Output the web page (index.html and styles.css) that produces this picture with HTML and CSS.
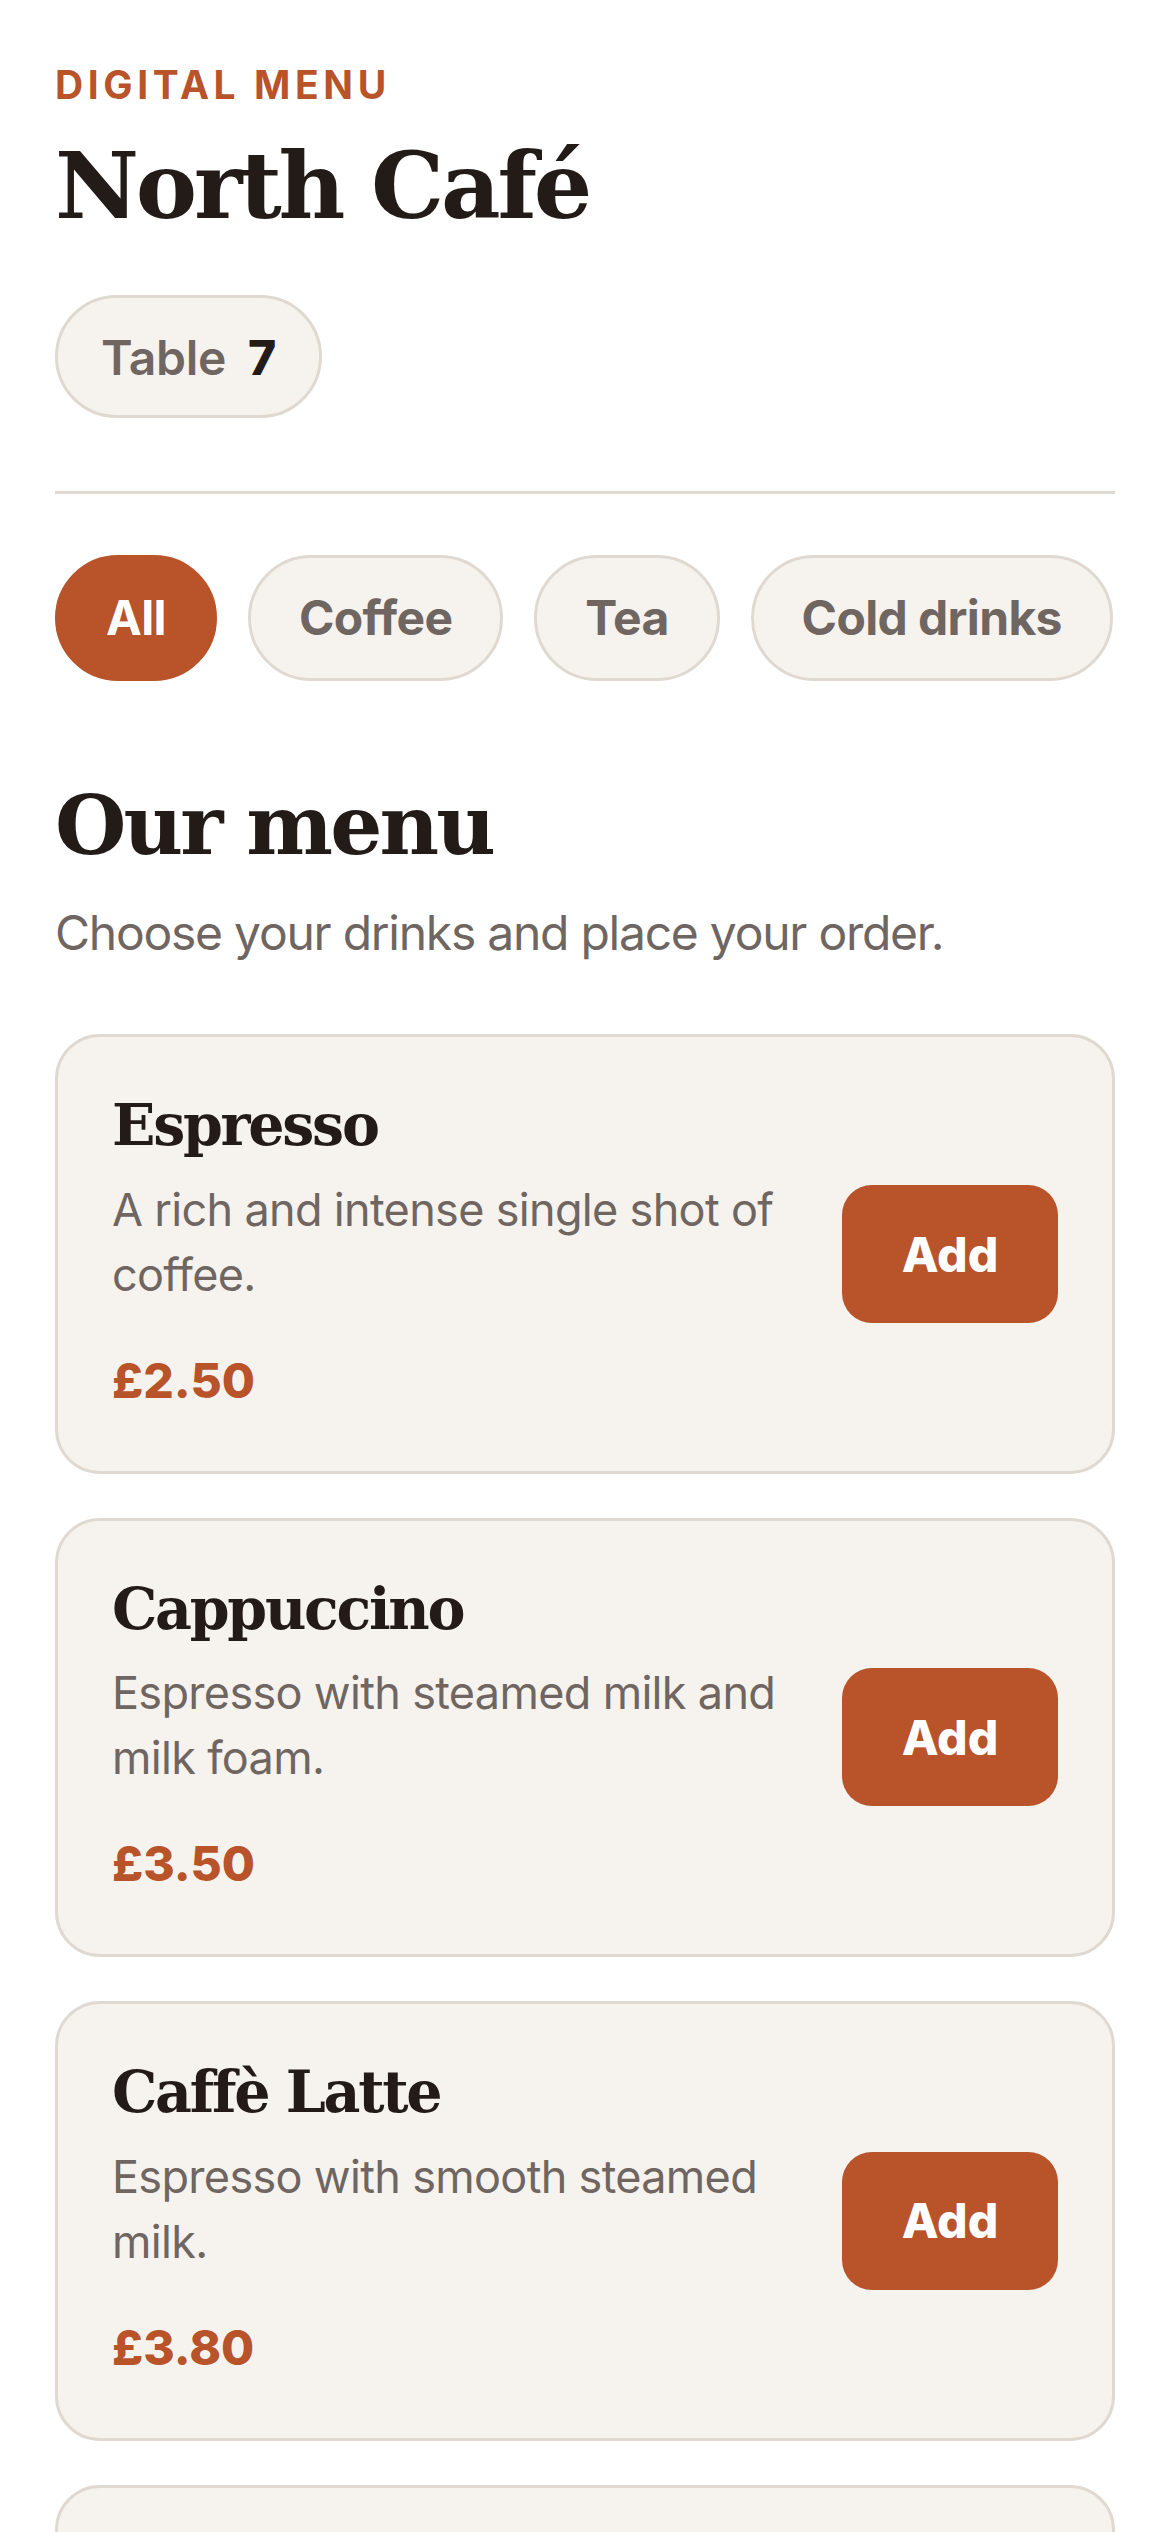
FILE: index.html
```html
<!DOCTYPE html>
<html lang="en">
<head>
<meta charset="utf-8">
<title>North Café — Digital Menu</title>
<link rel="stylesheet" href="styles.css">
</head>
<body>
<main class="page">
  <header class="header">
    <p class="eyebrow">DIGITAL MENU</p>
    <h1 class="title">North Café</h1>
    <div class="table-pill"><span class="table-label">Table</span><span class="table-num">7</span></div>
  </header>
  <hr class="divider">
  <nav class="chips">
    <button class="chip chip-active">All</button>
    <button class="chip">Coffee</button>
    <button class="chip">Tea</button>
    <button class="chip">Cold drinks</button>
  </nav>
  <section class="menu">
    <h2 class="menu-title">Our menu</h2>
    <p class="menu-sub">Choose your drinks and place your order.</p>
    <div class="cards">
      <article class="card">
        <div class="card-text">
          <h3 class="item-name">Espresso</h3>
          <p class="item-desc">A rich and intense single shot of coffee.</p>
          <p class="item-price">£2.50</p>
        </div>
        <button class="add-btn">Add</button>
      </article>
      <article class="card">
        <div class="card-text">
          <h3 class="item-name">Cappuccino</h3>
          <p class="item-desc">Espresso with steamed milk and milk foam.</p>
          <p class="item-price">£3.50</p>
        </div>
        <button class="add-btn">Add</button>
      </article>
      <article class="card">
        <div class="card-text">
          <h3 class="item-name">Caffè Latte</h3>
          <p class="item-desc">Espresso with smooth steamed milk.</p>
          <p class="item-price">£3.80</p>
        </div>
        <button class="add-btn">Add</button>
      </article>
      <article class="card">
        <div class="card-text">
          <h3 class="item-name">Flat White</h3>
          <p class="item-desc">Double espresso with velvety microfoam.</p>
          <p class="item-price">£3.60</p>
        </div>
        <button class="add-btn">Add</button>
      </article>
    </div>
  </section>
</main>
</body>
</html>
```
FILE: styles.css
```css
* { box-sizing: border-box; }

html, body {
  margin: 0;
  padding: 0;
  background: #ffffff;
}

body {
  font-family: Inter, "Noto Sans", "Liberation Sans", sans-serif;
  color: #231b18;
  letter-spacing: -0.02em;
}

.page {
  padding: 61px 55px 0 55px;
}

.eyebrow {
  margin: 0;
  font-size: 39px;
  line-height: 48px;
  font-weight: 700;
  letter-spacing: 4.6px;
  color: #b8532a;
}

.title {
  margin: 27px 0 0 0;
  font-family: "DejaVu Serif", "Liberation Serif", serif;
  font-size: 92px;
  line-height: 100px;
  font-weight: 700;
  letter-spacing: -0.035em;
  color: #231b18;
}

.table-pill {
  display: inline-flex;
  align-items: baseline;
  gap: 22px;
  margin-top: 59px;
  padding: 30px 43px 28px 43px;
  border: 3px solid #e0d9d1;
  border-radius: 999px;
  background: #f6f3ef;
  font-size: 48px;
  line-height: 59px;
}

.table-label {
  font-weight: 600;
  color: #6f6662;
}

.table-num {
  font-weight: 800;
  color: #231b18;
}

.divider {
  margin: 73px 0 0 0;
  border: 0;
  height: 3px;
  background: #e0d9d1;
}

.chips {
  display: flex;
  gap: 31px;
  margin-top: 61px;
}

.chip {
  font-family: inherit;
  letter-spacing: -0.65px;
  font-size: 48px;
  line-height: 60px;
  font-weight: 700;
  padding: 30px 48px;
  border: 3px solid #e0d9d1;
  border-radius: 999px;
  background: #f6f3ef;
  color: #6f6662;
  white-space: nowrap;
}

.chip-active {
  background: #b8532a;
  border-color: #b8532a;
  color: #ffffff;
}

.menu-title {
  margin: 95px 0 0 0;
  font-family: "DejaVu Serif", "Liberation Serif", serif;
  font-size: 82px;
  line-height: 1.2;
  font-weight: 700;
  letter-spacing: -0.035em;
  color: #231b18;
}

.menu-sub {
  margin: 23px 0 0 0;
  font-size: 48px;
  line-height: 72px;
  letter-spacing: -0.026em;
  color: #6f6662;
}

.cards {
  display: flex;
  flex-direction: column;
  gap: 44px;
  margin-top: 65px;
}

.card {
  display: flex;
  align-items: center;
  gap: 48px;
  padding: 54px;
  border: 3px solid #e0d9d1;
  border-radius: 45px;
  background: #f6f3ef;
}

.card-text {
  flex: 1;
  min-width: 0;
}

.item-name {
  margin: 0;
  font-family: "DejaVu Serif", "Liberation Serif", serif;
  font-size: 57px;
  line-height: 1.2;
  font-weight: 700;
  letter-spacing: -0.04em;
  color: #231b18;
}

.item-desc {
  margin: 17px 0 0 0;
  font-size: 45px;
  line-height: 65px;
  letter-spacing: -0.015em;
  color: #6f6662;
}

.item-price {
  margin: 38px 0 0 0;
  font-size: 48px;
  line-height: 72px;
  font-weight: 800;
  letter-spacing: 0;
  color: #b8532a;
}

.add-btn {
  flex: none;
  width: 216px;
  height: 138px;
  font-family: inherit;
  font-size: 48px;
  font-weight: 800;
  letter-spacing: 0;
  color: #ffffff;
  background: #b8532a;
  border: 0;
  border-radius: 30px;
}
```
